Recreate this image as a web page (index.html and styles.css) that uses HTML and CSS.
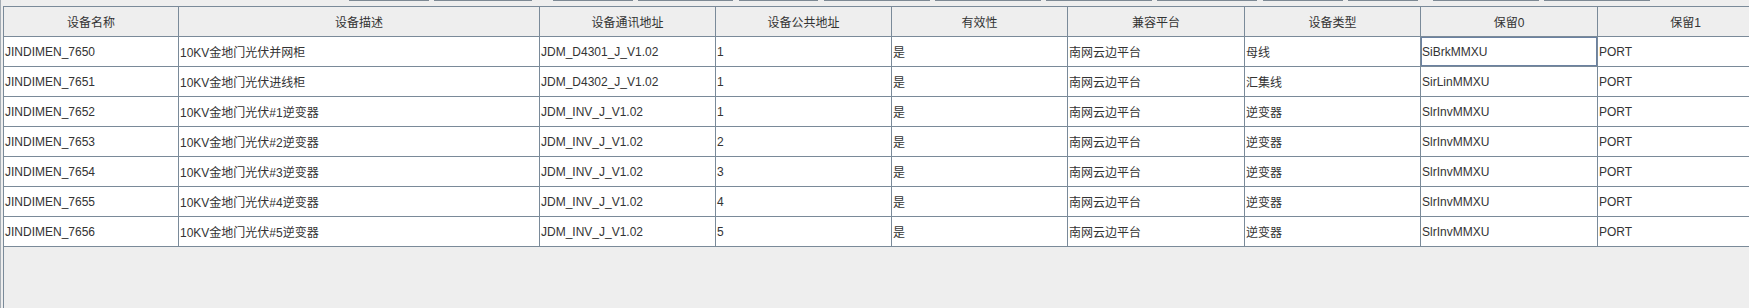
FILE: index.html
```html
<!DOCTYPE html>
<html lang="zh">
<head>
<meta charset="utf-8">
<title>设备列表</title>
<link rel="stylesheet" href="styles.css">
</head>
<body>
<div class="frame">
  <div class="toolbar">
    <span class="btn"></span><span class="btn"></span><span class="btn"></span><span class="btn"></span><span class="btn"></span><span class="btn"></span><span class="btn"></span><span class="btn"></span><span class="btn"></span><span class="btn"></span><span class="btn"></span><span class="btn"></span><span class="btn"></span>
  </div>
  <div class="viewport">
    <div class="grid">
      <div class="th">设备名称</div><div class="th">设备描述</div><div class="th">设备通讯地址</div><div class="th">设备公共地址</div><div class="th">有效性</div><div class="th">兼容平台</div><div class="th">设备类型</div><div class="th">保留0</div><div class="th">保留1</div>

      <div class="td">JINDIMEN_7650</div><div class="td">10KV金地门光伏并网柜</div><div class="td">JDM_D4301_J_V1.02</div><div class="td">1</div><div class="td">是</div><div class="td">南网云边平台</div><div class="td">母线</div><div class="td focus">SiBrkMMXU</div><div class="td">PORT</div>

      <div class="td">JINDIMEN_7651</div><div class="td">10KV金地门光伏进线柜</div><div class="td">JDM_D4302_J_V1.02</div><div class="td">1</div><div class="td">是</div><div class="td">南网云边平台</div><div class="td">汇集线</div><div class="td">SirLinMMXU</div><div class="td">PORT</div>

      <div class="td">JINDIMEN_7652</div><div class="td">10KV金地门光伏#1逆变器</div><div class="td">JDM_INV_J_V1.02</div><div class="td">1</div><div class="td">是</div><div class="td">南网云边平台</div><div class="td">逆变器</div><div class="td">SlrInvMMXU</div><div class="td">PORT</div>

      <div class="td">JINDIMEN_7653</div><div class="td">10KV金地门光伏#2逆变器</div><div class="td">JDM_INV_J_V1.02</div><div class="td">2</div><div class="td">是</div><div class="td">南网云边平台</div><div class="td">逆变器</div><div class="td">SlrInvMMXU</div><div class="td">PORT</div>

      <div class="td">JINDIMEN_7654</div><div class="td">10KV金地门光伏#3逆变器</div><div class="td">JDM_INV_J_V1.02</div><div class="td">3</div><div class="td">是</div><div class="td">南网云边平台</div><div class="td">逆变器</div><div class="td">SlrInvMMXU</div><div class="td">PORT</div>

      <div class="td">JINDIMEN_7655</div><div class="td">10KV金地门光伏#4逆变器</div><div class="td">JDM_INV_J_V1.02</div><div class="td">4</div><div class="td">是</div><div class="td">南网云边平台</div><div class="td">逆变器</div><div class="td">SlrInvMMXU</div><div class="td">PORT</div>

      <div class="td">JINDIMEN_7656</div><div class="td">10KV金地门光伏#5逆变器</div><div class="td">JDM_INV_J_V1.02</div><div class="td">5</div><div class="td">是</div><div class="td">南网云边平台</div><div class="td">逆变器</div><div class="td">SlrInvMMXU</div><div class="td">PORT</div>
    </div>
  </div>
</div>
</body>
</html>
```

FILE: styles.css
```css
html, body {
  margin: 0;
  padding: 0;
  width: 1749px;
  height: 308px;
  overflow: hidden;
  background: #eeeeee;
}

body {
  font-family: "Liberation Sans", Arial, "Noto Sans CJK SC", sans-serif;
  font-size: 12px;
  color: #333333;
}

.frame {
  height: 308px;
  border-left: 1px solid #a4acb4;
  display: flex;
  flex-direction: column;
}

.toolbar {
  height: 6px;
  flex: none;
  display: flex;
  gap: 5px;
  padding-left: 348px;
}

.btn {
  display: block;
  height: 1px;
  background: #7d8994;
  flex: none;
}
.btn:nth-child(1) { width: 80px; }
.btn:nth-child(2) { width: 98px; }
.btn:nth-child(3) { width: 80px; margin-left: 16px; }
.btn:nth-child(4) { width: 95px; }
.btn:nth-child(5) { width: 79px; margin-left: 1px; }
.btn:nth-child(6) { width: 106px; margin-left: 1px; }
.btn:nth-child(7) { width: 106px; }
.btn:nth-child(8) { width: 106px; }
.btn:nth-child(9) { width: 100px; }
.btn:nth-child(10) { width: 80px; margin-left: 1px; }
.btn:nth-child(11) { width: 70px; }
.btn:nth-child(12) { width: 106px; margin-left: 10px; }
.btn:nth-child(13) { width: 106px; }

.viewport {
  flex: 1;
  margin-left: 2px;
  border-left: 1px solid #7a8a99;
  overflow: hidden;
}

.grid {
  display: grid;
  grid-template-columns: 175px 361px 176px 176px 176px 177px 176px 177px 176px;
  grid-auto-rows: 30px;
  width: 1770px;
  border-top: 1px solid #7a8a99;
}

.th, .td {
  box-sizing: border-box;
  border-right: 1px solid #7a8a99;
  border-bottom: 1px solid #7a8a99;
  display: flex;
  align-items: center;
  white-space: nowrap;
  overflow: hidden;
}

.th {
  background: #eeeeee;
  justify-content: center;
  color: #333333;
}

.td {
  background: #ffffff;
  padding-left: 1px;
}

.td.focus {
  box-shadow: inset 0 0 0 1px #6b81a0;
}
```
